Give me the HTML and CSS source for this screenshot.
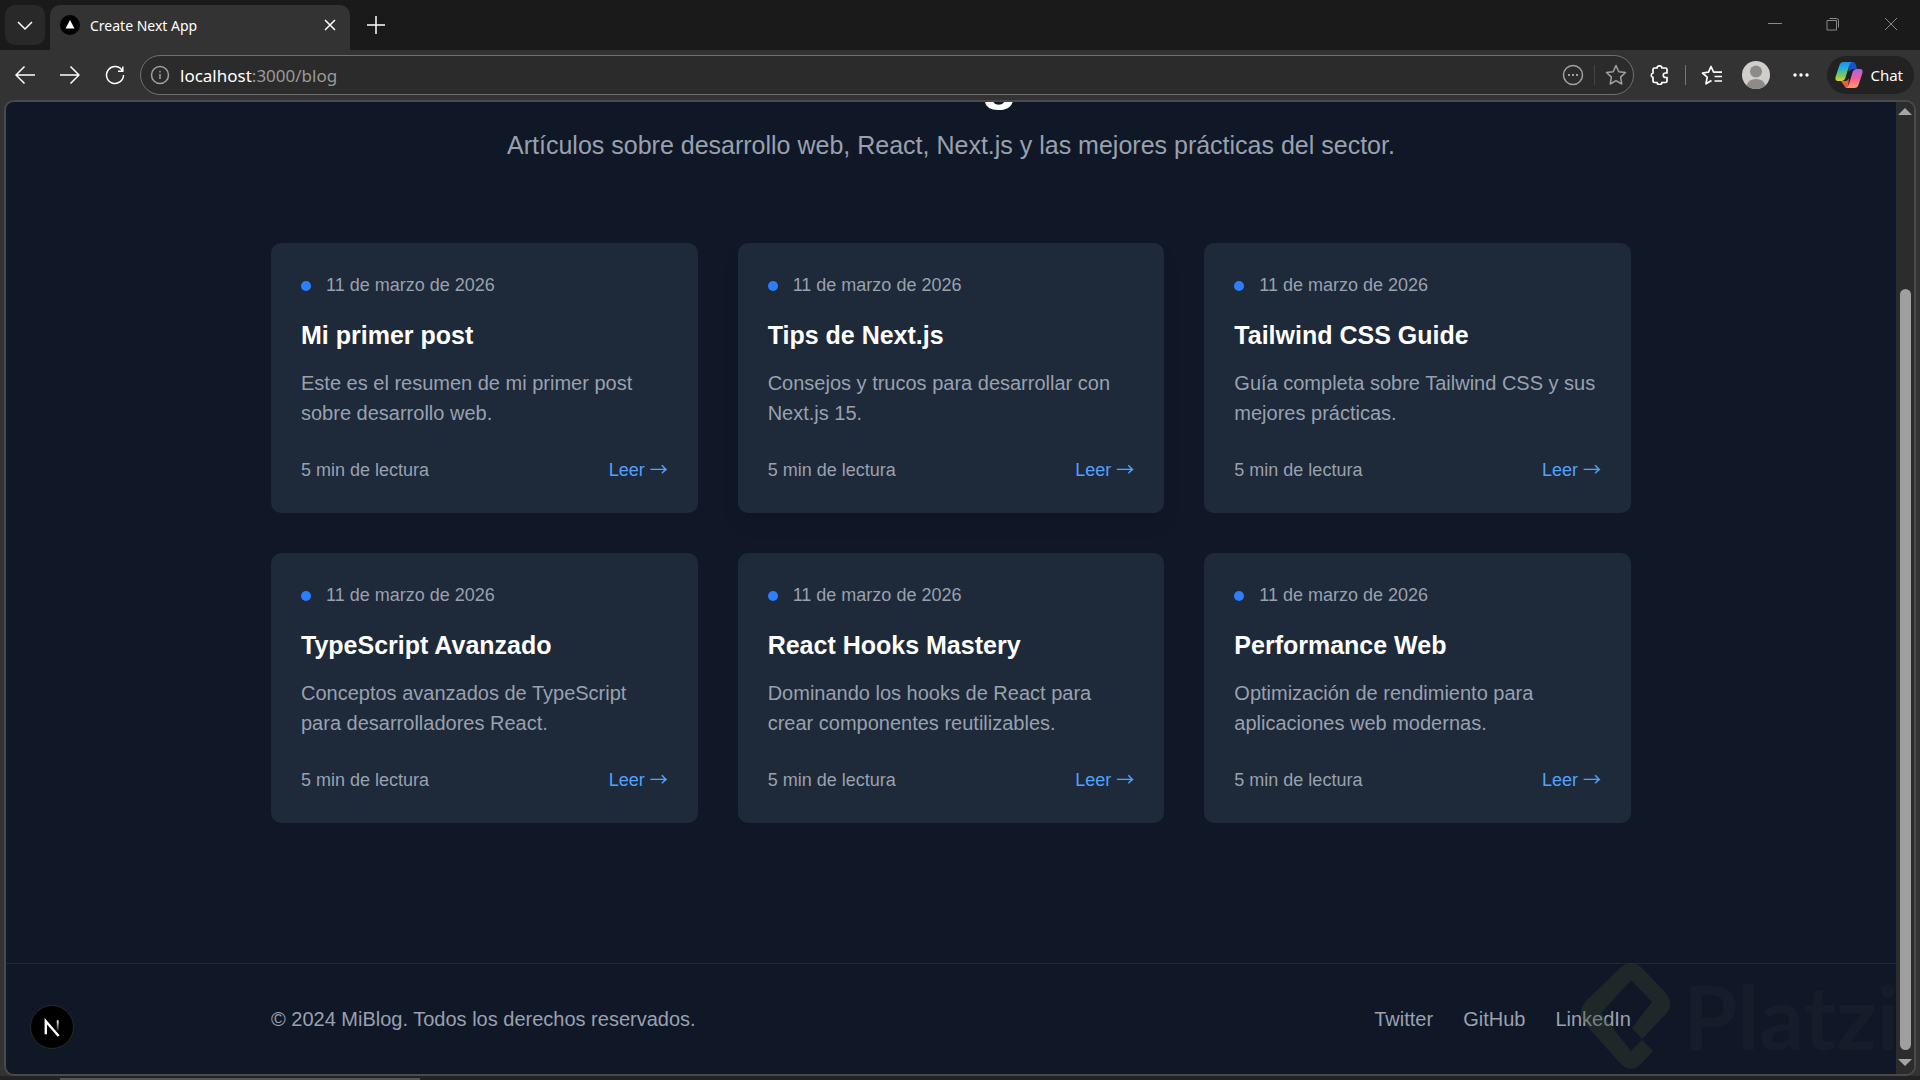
FILE: index.html
```html
<!DOCTYPE html>
<html lang="es">

<head>
    <meta charset="UTF-8">
    <title>Create Next App</title>
    <link rel="stylesheet" href="styles.css">
</head>

<body>
    <div class="window">
        <header class="tabbar">
            <button class="tab-menu" aria-label="Pestañas">
                <svg width="16" height="16" viewBox="0 0 16 16"><path d="M1 5l7 7 7-7" /></svg>
            </button>
            <div class="tab">
                <svg class="favicon" width="20" height="20" viewBox="0 0 20 20">
                    <circle cx="10" cy="10" r="10" fill="#000" />
                    <path d="M10 5l4.500 8.500h-9z" fill="#fff" />
                </svg>
                <span class="tab-title">Create Next App</span>
                <button class="icon" aria-label="Cerrar pestaña">
                    <svg width="12" height="12" viewBox="0 0 12 12"><path d="M1 1l10 10M11 1L1 11" /></svg>
                </button>
            </div>
            <button class="icon new-tab" aria-label="Nueva pestaña">
                <svg width="20" height="20" viewBox="0 0 20 20"><path d="M10 1v18M1 10h18" /></svg>
            </button>
            <div class="window-buttons">
                <button class="icon" aria-label="Minimizar">
                    <svg width="14" height="14" viewBox="0 0 14 14"><path d="M0 6.500h14" /></svg>
                </button>
                <button class="icon" aria-label="Restaurar">
                    <svg width="14" height="14" viewBox="0 0 14 14"><path d="M1 3.500h9.500v9.500H1zM3.500 1.500h7q2 0 2 2v7" /></svg>
                </button>
                <button class="icon" aria-label="Cerrar">
                    <svg width="14" height="14" viewBox="0 0 14 14"><path d="M1 1l12 12M13 1L1 13" /></svg>
                </button>
            </div>
        </header>

        <div class="toolbar">
            <div class="nav-buttons">
                <button class="icon" aria-label="Atrás">
                    <svg width="20" height="20" viewBox="0 0 20 20"><path d="M20 10H1M9.500 1.500L1 10l8.500 8.500" /></svg>
                </button>
                <button class="icon" aria-label="Adelante">
                    <svg width="20" height="20" viewBox="0 0 20 20"><path d="M0 10h19M10.500 1.500L19 10l-8.500 8.500" /></svg>
                </button>
                <button class="icon" aria-label="Recargar">
                    <svg width="20" height="20" viewBox="0 0 20 20"><path d="M17.500 6A8.500 8.500 0 1 0 18.500 10M17.800 1.500V6.300H13" /></svg>
                </button>
            </div>
            <div class="address">
                <svg class="dim" width="20" height="20" viewBox="0 0 20 20"><circle cx="10" cy="10" r="8.500" /><path d="M10 9v5M10 6v1.600" /></svg>
                <div class="url"><b>localhost</b>:3000/blog</div>
                <button class="icon dim" aria-label="Más">
                    <svg width="22" height="22" viewBox="0 0 22 22"><circle cx="11" cy="11" r="9.500" /><path d="M6 11h2M10 11h2M14 11h2" stroke-width="2" /></svg>
                </button>
                <span class="divider"></span>
                <button class="icon dim" aria-label="Favorito">
                    <svg width="22" height="22" viewBox="0 0 22 22"><path d="M11 1.500l2.800 6.200 6.700.8-4.900 4.600 1.200 6.900-5.800-3.300L5.200 20l1.200-6.900L1.500 8.500l6.700-.8z" stroke-linejoin="round" /></svg>
                </button>
            </div>
            <div class="tools">
                <button class="icon" aria-label="Extensiones">
                    <svg width="20" height="20" viewBox="0 0 20 20"><path d="M4.500 3H7a2.500 2.200 0 0 1 5 0h3.500Q17 3 17 4.500V8h-1.500a2 2 0 0 0 0 4.500H17V16q0 1.500-1.500 1.500H12a2.500 2 0 0 1-5 0H4.500Q3 17.500 3 16v-3.500a2.200 2.300 0 0 1 0-4.500V4.500Q3 3 4.500 3z" stroke-width="1.700" /></svg>
                </button>
                <span class="divider bright"></span>
                <button class="icon" aria-label="Favoritos">
                    <svg width="22" height="20" viewBox="0 0 22 20"><path d="M10.500 15.500L5 18.800l1.200-6.600L1.500 8l6-.8L10 1.500l2.600 5.700H21M13.500 11.500H21M13.500 16H21" stroke-width="1.700" stroke-linejoin="round" /></svg>
                </button>
                <button class="icon" aria-label="Perfil">
                    <svg class="avatar" width="28" height="28" viewBox="0 0 28 28">
                        <circle cx="14" cy="14" r="14" fill="#d0cecb" />
                        <circle cx="14" cy="10.500" r="6" fill="#8d8a88" />
                        <path d="M4.500 24.200Q7 18 14 18t9.500 6.200A14 14 0 0 1 4.500 24.200z" fill="#8d8a88" />
                    </svg>
                </button>
                <button class="icon" aria-label="Configuración">
                    <svg width="18" height="6" viewBox="0 0 18 6"><g fill="#fff" stroke="none"><circle cx="3" cy="3" r="1.700" /><circle cx="9" cy="3" r="1.700" /><circle cx="15" cy="3" r="1.700" /></g></svg>
                </button>
            </div>
            <button class="chat">
                <svg width="28" height="28" viewBox="0 0 28 28">
                    <defs>
                        <linearGradient id="cool" x1="0" y1="0" x2="0" y2="1">
                            <stop offset="0" stop-color="#1a8fe8" />
                            <stop offset=".35" stop-color="#27b4d4" />
                            <stop offset=".7" stop-color="#7cc35a" />
                            <stop offset="1" stop-color="#e3d13c" />
                        </linearGradient>
                        <linearGradient id="warm" x1="0" y1="0" x2="0" y2="1">
                            <stop offset="0" stop-color="#a865e8" />
                            <stop offset=".5" stop-color="#ee5f9a" />
                            <stop offset="1" stop-color="#ff9a5c" />
                        </linearGradient>
                    </defs>
                    <g stroke="none">
                        <path d="M13 1h5q2 0 2.700 2.200L22 8h-4q-3 0-4 3z" fill="#1a50c8" />
                        <path d="M6 20h4q3 0 4-3l-1 10h-1q-2 0-2.800-2.200z" fill="#e2603c" />
                        <path d="M8.500 1H17q-2 .5-3 4l-3.500 11.500Q9.500 20 6 20H3q-3.500 0-2.300-4.500L4.500 4Q5.500 1 8.500 1z" fill="url(#cool)" />
                        <path d="M19.500 27H11q2-.5 3-4l3.500-11.500Q18.500 8 22 8h3q3.500 0 2.300 4.500L23.500 24q-1 3-4 3z" fill="url(#warm)" />
                    </g>
                </svg>
                Chat
            </button>
        </div>

        <div class="frame">
            <div class="viewport">
                <main class="blog">
                    <div class="intro">
                        <h1>Blog</h1>
                        <p>Artículos sobre desarrollo web, React, Next.js y las mejores prácticas del sector.</p>
                    </div>

                    <div class="posts">
                        <article class="card">
                            <div class="date">11 de marzo de 2026</div>
                            <h2>Mi primer post</h2>
                            <p>Este es el resumen de mi primer post sobre desarrollo web.</p>
                            <div class="meta"><span>5 min de lectura</span><a href="#">Leer <span class="go">→</span></a></div>
                        </article>
                        <article class="card active">
                            <div class="date">11 de marzo de 2026</div>
                            <h2>Tips de Next.js</h2>
                            <p>Consejos y trucos para desarrollar con Next.js 15.</p>
                            <div class="meta"><span>5 min de lectura</span><a href="#">Leer <span class="go">→</span></a></div>
                        </article>
                        <article class="card">
                            <div class="date">11 de marzo de 2026</div>
                            <h2>Tailwind CSS Guide</h2>
                            <p>Guía completa sobre Tailwind CSS y sus mejores prácticas.</p>
                            <div class="meta"><span>5 min de lectura</span><a href="#">Leer <span class="go">→</span></a></div>
                        </article>
                        <article class="card">
                            <div class="date">11 de marzo de 2026</div>
                            <h2>TypeScript Avanzado</h2>
                            <p>Conceptos avanzados de TypeScript para desarrolladores React.</p>
                            <div class="meta"><span>5 min de lectura</span><a href="#">Leer <span class="go">→</span></a></div>
                        </article>
                        <article class="card">
                            <div class="date">11 de marzo de 2026</div>
                            <h2>React Hooks Mastery</h2>
                            <p>Dominando los hooks de React para crear componentes reutilizables.</p>
                            <div class="meta"><span>5 min de lectura</span><a href="#">Leer <span class="go">→</span></a></div>
                        </article>
                        <article class="card">
                            <div class="date">11 de marzo de 2026</div>
                            <h2>Performance Web</h2>
                            <p>Optimización de rendimiento para aplicaciones web modernas.</p>
                            <div class="meta"><span>5 min de lectura</span><a href="#">Leer <span class="go">→</span></a></div>
                        </article>
                    </div>
                </main>

                <footer class="footer">
                    <div class="footer-inner">
                        <p>© 2024 MiBlog. Todos los derechos reservados.</p>
                        <nav>
                            <a href="#">Twitter</a>
                            <a href="#">GitHub</a>
                            <a href="#">LinkedIn</a>
                        </nav>
                    </div>
                </footer>

                <button class="next-badge" aria-label="Next.js">
                    <svg width="42" height="42" viewBox="0 0 44 44">
                        <defs>
                            <linearGradient id="fade" x1="0" y1="0" x2="0" y2="1">
                                <stop offset="0" stop-color="#fff" />
                                <stop offset="1" stop-color="#fff" stop-opacity=".1" />
                            </linearGradient>
                        </defs>
                        <path d="M15.500 29.500V16L29 31.500" fill="none" stroke="#fff" stroke-width="2.500" />
                        <path d="M27 15h2v11h-2z" fill="url(#fade)" stroke="none" />
                    </svg>
                </button>
            </div>
            <div class="watermark">
                <svg width="90" height="106" viewBox="0 0 90 106">
                    <path d="M39 5Q50-5 61 5L84 29Q94 41 85 51L61 76 51 65 71 39 50 17 20 50 50 88 61 77 72 88 61 100Q50 111 39 100L5 62Q-5 50 5 38z" />
                </svg>
                <span>Platzi</span>
            </div>
            <div class="scrollbar">
                <span class="arrow up"></span>
                <span class="thumb"></span>
                <span class="arrow down"></span>
            </div>
        </div>
        <div class="edge"></div>
    </div>
</body>

</html>
```
FILE: styles.css
```css
* {
    box-sizing: border-box;
}

body {
    margin: 0;
    font-family: "Liberation Sans", Arial, sans-serif;
    background-color: #333;
}

h1, h2, p {
    margin: 0;
}

a {
    text-decoration: none;
    color: inherit;
}

button {
    border: 0;
    padding: 0;
    background: none;
    color: inherit;
    font: inherit;
}

svg {
    display: block;
    flex: none;
    fill: none;
    stroke: currentColor;
    stroke-width: 1.500;
}

.window {
    display: flex;
    flex-direction: column;
    height: 100vh;
    overflow: hidden;
    color: #fff;
}

.icon {
    display: flex;
    align-items: center;
    justify-content: center;
}

/* browser tabs */
.tabbar {
    display: flex;
    height: 50px;
    padding: 5px 0 0 5px;
    background-color: #1a1a1a;
    font: 14px "Noto Sans", sans-serif;
}

.tab-menu {
    display: flex;
    align-items: center;
    justify-content: center;
    width: 40px;
    height: 40px;
    border-radius: 10px;
    background-color: #292929;
}

.tab {
    display: flex;
    align-items: center;
    gap: 10px;
    width: 300px;
    margin-left: 5px;
    padding: 0 14px 5px 10px;
    border-radius: 10px 10px 0 0;
    background-color: #333;
}

.favicon,
.avatar {
    stroke: none;
}

.tab-title {
    flex: 1;
}

.new-tab {
    width: 52px;
    height: 40px;
}

.window-buttons {
    display: flex;
    gap: 44px;
    height: 38px;
    margin-left: auto;
    padding-right: 22px;
    color: #8a8a8a;
}

.window-buttons svg {
    stroke-width: 1;
}

/* address bar */
.toolbar {
    display: flex;
    align-items: center;
    height: 50px;
    padding: 0 6px 0 15px;
    background-color: #333;
}

.nav-buttons {
    display: flex;
    gap: 25px;
    margin-right: 15px;
}

.address {
    display: flex;
    flex: 1;
    align-items: center;
    gap: 10px;
    height: 40px;
    padding: 0 6px 0 9px;
    border: 1px solid #707070;
    border-radius: 20px;
    background-color: #2b2b2b;
}

.url {
    flex: 1;
    color: #9a9a9a;
    font: 17px "Noto Sans", sans-serif;
}

.url b {
    color: #fff;
    font-weight: 400;
}

.dim {
    color: #a0a0a0;
}

.divider {
    width: 1px;
    height: 20px;
    background-color: #444;
}

.divider.bright {
    background-color: #777;
}

.tools {
    display: flex;
    align-items: center;
    gap: 15px;
    margin: 0 17px 0 16px;
}

.tools .icon:nth-child(4) {
    margin: 0 7px 0 4px;
}

.chat {
    display: flex;
    align-items: center;
    gap: 7px;
    height: 38px;
    padding: 0 11px 0 8px;
    border-radius: 19px;
    background-color: #222;
    font: 15px "Noto Sans", sans-serif;
}

/* page area */
.frame {
    position: relative;
    display: flex;
    flex: 1;
    min-height: 0;
    margin: 0 4px;
    overflow: hidden;
    border: 2px solid #4a4a4a;
    border-radius: 10px;
    background-color: #2c2c2c;
}

/* scrolled to the end, so the content hangs from the bottom */
.viewport {
    position: relative;
    display: flex;
    flex: 1;
    flex-direction: column;
    justify-content: flex-end;
    overflow: hidden;
    background-color: #101828;
}

.blog,
.footer-inner {
    width: 100%;
    max-width: 1440px;
    margin: 0 auto;
    padding: 0 40px;
}

.blog {
    padding-bottom: 140px;
}

.intro {
    margin-bottom: 80px;
    text-align: center;
}

.intro h1 {
    margin-bottom: 20px;
    font-size: 60px;
    line-height: 60px;
}

.intro p {
    color: #99a1af;
    font-size: 25px;
    line-height: 35px;
}

.posts {
    display: grid;
    grid-template-columns: repeat(3, 1fr);
    gap: 40px;
}

.card {
    padding: 30px;
    border-radius: 10px;
    background-color: #1e2939;
    color: #99a1af;
    font-size: 20px;
    line-height: 30px;
}

.card.active {
    box-shadow: 0 12px 19px -4px rgba(0, 0, 0, 0.15);
}

.date,
.meta {
    display: flex;
    align-items: center;
    font-size: 18px;
    line-height: 25px;
}

.date {
    gap: 15px;
    margin-bottom: 20px;
}

.date::before {
    content: "";
    width: 10px;
    height: 10px;
    border-radius: 50%;
    background-color: #2b7fff;
}

.card h2 {
    margin-bottom: 15px;
    color: #fff;
    font-size: 25px;
    line-height: 35px;
}

.card p {
    margin-bottom: 30px;
}

.meta {
    justify-content: space-between;
}

.meta a {
    color: #51a2ff;
}

.go {
    font-family: "Noto Sans CJK JP", sans-serif;
    line-height: 1;
}

.footer {
    padding: 40px 0;
    border-top: 1px solid #1e2939;
    color: #99a1af;
    font-size: 20px;
    line-height: 30px;
}

.footer-inner {
    display: flex;
    justify-content: space-between;
}

.footer nav {
    display: flex;
    gap: 30px;
}

.next-badge {
    position: absolute;
    bottom: 25px;
    left: 24px;
    border: 1px solid #2a2a2a;
    border-radius: 50%;
    background-color: #000;
}

.watermark {
    position: absolute;
    right: 15px;
    bottom: 5px;
    display: flex;
    align-items: center;
    gap: 12px;
    color: #171c2a;
    font: 700 88px Lato, sans-serif;
    line-height: 106px;
    pointer-events: none;
}

.watermark svg {
    fill: #384828;
    stroke: none;
    opacity: 0.35;
}

.scrollbar {
    z-index: 1;
    display: flex;
    flex-direction: column;
    align-items: center;
    width: 18px;
    padding: 6px 0 8px;
    background-color: #2c2c2c;
}

.arrow {
    border: 7px solid transparent;
}

.up {
    border-top: 0;
    border-bottom-color: #a5a5a5;
}

.down {
    border-bottom: 0;
    border-top-color: #a5a5a5;
}

.thumb {
    flex: 1;
    width: 11px;
    margin: 174px 0 9px;
    border-radius: 6px;
    background-color: #9f9f9f;
}

/* top of the taskbar under the window */
.edge {
    height: 4px;
    padding: 2px 0 0 60px;
    background-color: #222;
}

.edge::before {
    content: "";
    display: block;
    width: 360px;
    height: 2px;
    background-color: #555;
}
```
